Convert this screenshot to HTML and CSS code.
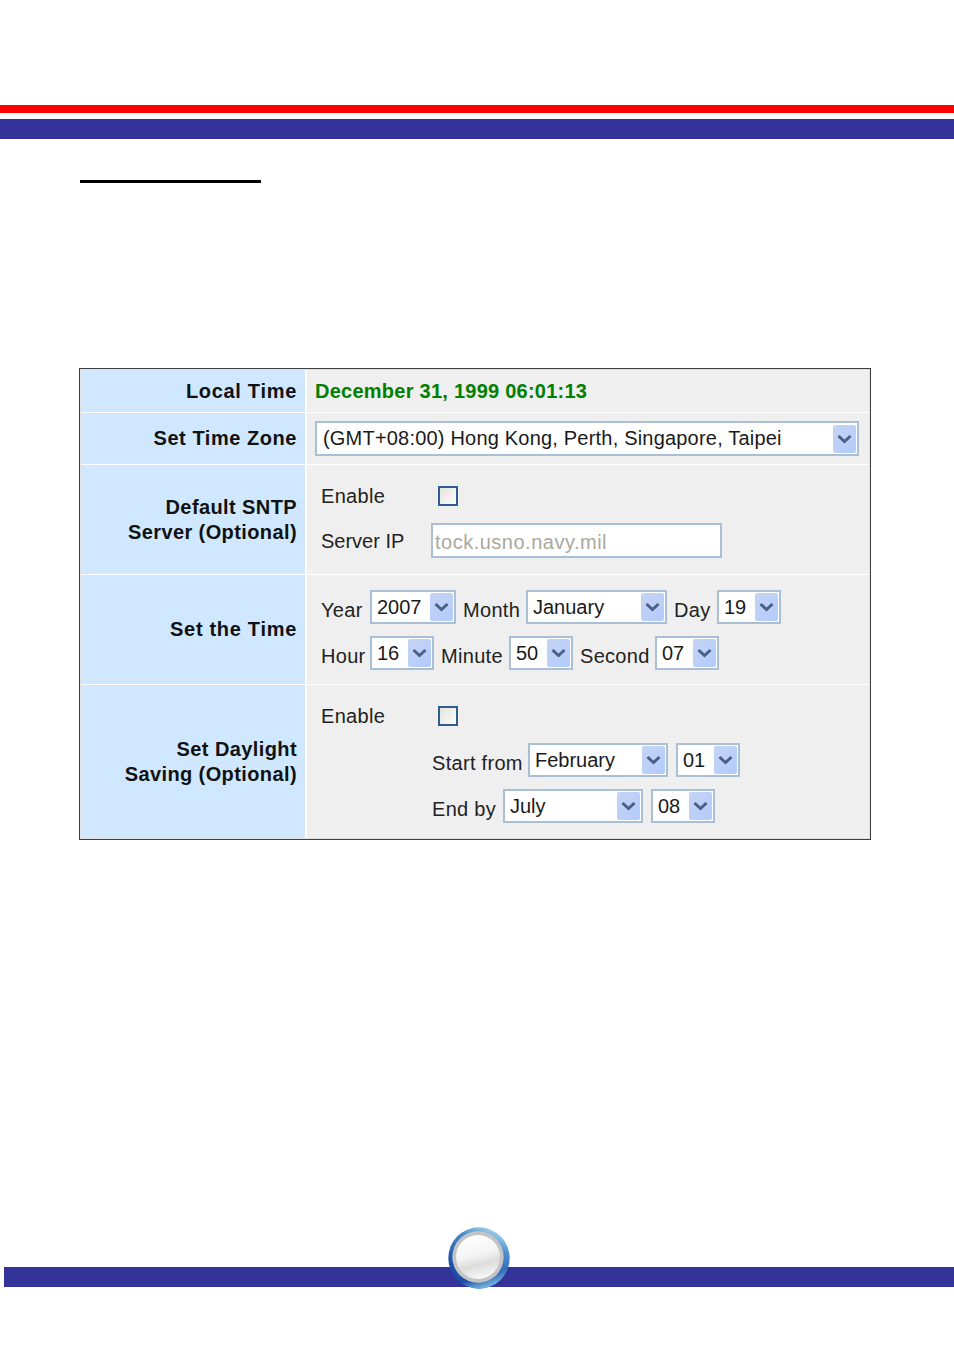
FILE: index.html
```html
<!DOCTYPE html>
<html lang="en">
<head>
<meta charset="utf-8">
<title>Time Setting</title>
<link rel="stylesheet" href="styles.css">
</head>
<body>
<svg class="defs" width="0" height="0" aria-hidden="true">
  <symbol id="chev" viewBox="0 0 23 28">
    <path d="M5.5 11 L11.5 16.5 L17.5 11" fill="none" stroke="#4a5f88" stroke-width="3"/>
  </symbol>
</svg>
<div class="page">
  <div class="red-bar"></div>
  <div class="blue-bar"></div>
  <div class="rule"></div>

  <div class="panel">
    <div class="head wide">Local Time</div>
    <div class="val val-tight"><span class="now">December 31, 1999 06:01:13</span></div>

    <div class="head">Set Time Zone</div>
    <div class="val val-tight">
      <div class="sel w-zone"><span class="sel-text zone-text">(GMT+08:00) Hong Kong, Perth, Singapore, Taipei</span><span class="arrow"><svg width="23" height="28"><use href="#chev"/></svg></span></div>
    </div>

    <div class="head narrow">Default SNTP<br>Server (Optional)</div>
    <div class="val val-stack val-sntp">
      <div class="line"><span class="lbl flat w-en">Enable</span><span class="check"></span></div>
      <div class="line"><span class="lbl flat w-ip">Server IP</span><input class="ip" type="text" value="tock.usno.navy.mil" disabled></div>
    </div>

    <div class="head wide">Set the Time</div>
    <div class="val val-stack val-time">
      <div class="line gap7">
        <span class="lbl w-year">Year</span>
        <div class="sel w-86"><span class="sel-text">2007</span><span class="arrow"><svg width="23" height="28"><use href="#chev"/></svg></span></div>
        <span class="lbl w-month">Month</span>
        <div class="sel w-141"><span class="sel-text">January</span><span class="arrow"><svg width="23" height="28"><use href="#chev"/></svg></span></div>
        <span class="lbl w-day">Day</span>
        <div class="sel w-64"><span class="sel-text">19</span><span class="arrow"><svg width="23" height="28"><use href="#chev"/></svg></span></div>
      </div>
      <div class="line gap7">
        <span class="lbl w-year">Hour</span>
        <div class="sel w-64"><span class="sel-text">16</span><span class="arrow"><svg width="23" height="28"><use href="#chev"/></svg></span></div>
        <span class="lbl w-minute">Minute</span>
        <div class="sel w-64"><span class="sel-text">50</span><span class="arrow"><svg width="23" height="28"><use href="#chev"/></svg></span></div>
        <span class="lbl w-second">Second</span>
        <div class="sel w-64"><span class="sel-text">07</span><span class="arrow"><svg width="23" height="28"><use href="#chev"/></svg></span></div>
      </div>
    </div>

    <div class="head narrow">Set Daylight<br>Saving (Optional)</div>
    <div class="val val-stack val-dst">
      <div class="line"><span class="lbl flat w-en">Enable</span><span class="check"></span></div>
      <div class="dst-range">
        <div class="line gap8">
          <span class="lbl w-start">Start from</span>
          <div class="sel w-140"><span class="sel-text">February</span><span class="arrow"><svg width="23" height="28"><use href="#chev"/></svg></span></div>
          <div class="sel w-64"><span class="sel-text">01</span><span class="arrow"><svg width="23" height="28"><use href="#chev"/></svg></span></div>
        </div>
        <div class="line gap8">
          <span class="lbl w-end">End by</span>
          <div class="sel w-140"><span class="sel-text">July</span><span class="arrow"><svg width="23" height="28"><use href="#chev"/></svg></span></div>
          <div class="sel w-64"><span class="sel-text">08</span><span class="arrow"><svg width="23" height="28"><use href="#chev"/></svg></span></div>
        </div>
      </div>
    </div>
  </div>

  <div class="foot-bar">
    <svg class="ball" width="62" height="62" viewBox="0 0 62 62" aria-hidden="true">
      <defs>
        <linearGradient id="ring" x1="0.7" y1="0" x2="0.35" y2="0.75">
          <stop offset="0" stop-color="#a8d8ec"/>
          <stop offset="0.35" stop-color="#4a8ccc"/>
          <stop offset="1" stop-color="#1c4ea6"/>
        </linearGradient>
        <linearGradient id="ringLow" x1="0.45" y1="0.5" x2="0.6" y2="1">
          <stop offset="0.6" stop-color="#8ec8e6" stop-opacity="0"/>
          <stop offset="1" stop-color="#7cc0e4"/>
        </linearGradient>
        <linearGradient id="pearl" x1="0.35" y1="0" x2="0.6" y2="1">
          <stop offset="0" stop-color="#ffffff"/>
          <stop offset="0.45" stop-color="#f4f4f4"/>
          <stop offset="0.68" stop-color="#dcdcdc"/>
          <stop offset="1" stop-color="#fafafa"/>
        </linearGradient>
      </defs>
      <circle cx="31" cy="31" r="30.7" fill="url(#ring)"/>
      <circle cx="31" cy="31" r="30.7" fill="url(#ringLow)"/>
      <circle cx="30" cy="30" r="25.7" fill="#c4c4c6"/>
      <circle cx="30" cy="30" r="22" fill="url(#pearl)"/>
    </svg>
  </div>
</div>
</body>
</html>
```
FILE: styles.css
```css
html, body { margin: 0; padding: 0; background: #fff; }
.defs { position: absolute; }
.page {
  width: 954px;
  height: 1353px;
  overflow: hidden;
  padding-top: 105px;
  box-sizing: border-box;
  font-family: "Liberation Sans", Arial, sans-serif;
  font-size: 20px;
  color: #222;
}
.red-bar { height: 8px; background: #ff0000; }
.blue-bar { height: 20px; margin-top: 6px; background: #333399; }
.rule { width: 181px; height: 3px; margin: 41px 0 0 80px; background: #000; }

.panel {
  box-sizing: border-box;
  width: 792px;
  margin: 185px 0 0 79px;
  border: 1px solid #3f3f3f;
  padding: 1px;
  box-shadow: inset 0 0 0 1px #e2e2e2;
  background: #fff;
  display: grid;
  grid-template-columns: 224px 562px;
  grid-template-rows: 42px 51px 109px 109px 153px;
  column-gap: 2px;
  row-gap: 1px;
}
.head {
  background: #d0e8ff;
  display: flex;
  align-items: center;
  justify-content: flex-end;
  text-align: right;
  padding-right: 8px;
  font-weight: bold;
  line-height: 25px;
  letter-spacing: 0.55px;
  color: #111;
}
.head.wide { letter-spacing: 0.7px; }
.head.narrow { letter-spacing: 0.4px; }
.val { background: #efefef; }
.val-tight { display: flex; align-items: center; padding-left: 8px; }
.val-stack { display: flex; flex-direction: column; padding-left: 14px; box-sizing: border-box; }
.val-sntp { padding-top: 21px; gap: 17px; }
.val-time { padding-top: 15px; gap: 12px; }
.val-dst { padding-top: 21px; gap: 17px; }
.dst-range { display: flex; flex-direction: column; gap: 12px; margin-left: 111px; }

.now { color: #008000; font-weight: bold; letter-spacing: 0.25px; }

.line { display: flex; align-items: center; }
.gap7 { gap: 7px; }
.gap8 { gap: 8px; }
.lbl { padding-top: 6px; line-height: 20px; letter-spacing: 0.3px; white-space: nowrap; }
.lbl.flat { padding-top: 0; }

.w-en { width: 117px; }
.w-ip { width: 110px; letter-spacing: 0; }
.w-year { width: 42px; }
.w-month { width: 56px; }
.w-day { width: 36px; }
.w-minute { width: 61px; }
.w-second { width: 68px; }
.w-start { width: 88px; }
.w-end { width: 63px; }

.check {
  box-sizing: border-box;
  width: 20px;
  height: 20px;
  border: 2px solid #2f5f8f;
  background: linear-gradient(135deg, #e4e4de, #fbfbf8);
}
.ip {
  box-sizing: border-box;
  width: 291px;
  height: 35px;
  margin: 0;
  padding: 3px 0 0 2px;
  border: 2px solid #a8bfd6;
  background: #fff;
  font: inherit;
  letter-spacing: 0.5px;
}
.ip:disabled { color: #aaa89e; background: #fff; -webkit-text-fill-color: #aaa89e; opacity: 1; }

.sel {
  box-sizing: border-box;
  display: flex;
  align-items: center;
  justify-content: space-between;
  height: 34px;
  padding: 1px 1px 1px 5px;
  border: 2px solid #a8bfd6;
  background: #fff;
  color: #1a1a1a;
}
.sel-text { white-space: nowrap; }
.zone-text { letter-spacing: 0.2px; padding-left: 1px; }
.arrow {
  flex: none;
  display: block;
  width: 23px;
  height: 28px;
  border-radius: 2px;
  background: linear-gradient(135deg, #c6d4f4, #b2cbfb);
}
.arrow svg { display: block; }
.w-zone { width: 544px; height: 35px; }
.w-86 { width: 86px; }
.w-141 { width: 141px; }
.w-140 { width: 140px; }
.w-64 { width: 64px; }

.foot-bar {
  position: relative;
  height: 20px;
  margin: 427px 0 0 4px;
  background: #333399;
}
.ball { position: absolute; left: 443.5px; top: -40px; }
```
